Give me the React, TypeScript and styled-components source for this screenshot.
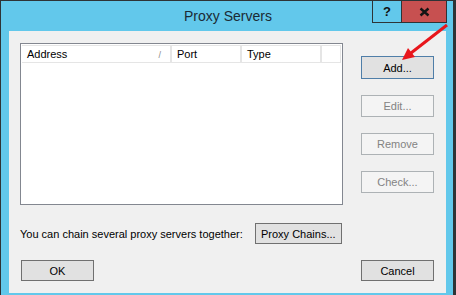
import React from "react";
import styled, { createGlobalStyle } from "styled-components";

const Global = createGlobalStyle`
  html, body { margin: 0; padding: 0; background: #ffffff; }
  body { font-family: "Liberation Sans", Arial, sans-serif; }
  * { box-sizing: border-box; }
`;

const Frame = styled.div`
  position: relative;
  width: 456px;
  height: 295px;
  overflow: hidden;
  background: #62c8eb;
  border-left: 1px solid #2e3336;
  border-top: 1px solid #2e3336;
  border-right: 3px solid #2e3336;
  display: flex;
  flex-direction: column;
`;

const TitleBar = styled.div`
  height: 30px;
  flex: none;
  display: grid;
  grid-template-columns: 1fr auto 1fr;
  align-items: start;
`;

const Title = styled.div`
  grid-column: 2;
  padding-top: 7px;
  font-size: 14px;
  color: #1b2b35;
  white-space: nowrap;
  margin-left: 2px;
`;

const CaptionButtons = styled.div`
  grid-column: 3;
  justify-self: end;
  display: flex;
  margin-right: 6px;
  margin-top: -1px;
`;

const CaptionButton = styled.div<{ $close?: boolean }>`
  height: 23px;
  width: ${(p) => (p.$close ? "46px" : "30px")};
  border: 1px solid #2e3336;
  margin-left: ${(p) => (p.$close ? "-1px" : "0")};
  background: ${(p) => (p.$close ? "#c75050" : "#62c8eb")};
  display: flex;
  align-items: center;
  justify-content: center;
  font-weight: bold;
  font-size: 13px;
  color: #111;
`;

const Client = styled.div`
  flex: none;
  height: 262px;
  margin: 0 7px 0 8px;
  background: #f0f0f0;
  padding: 12px 12px 0 11px;
  display: flex;
  flex-direction: column;
  font-size: 11px;
  color: #000;
`;

const TopRow = styled.div`
  display: flex;
  align-items: flex-start;
`;

const ListBox = styled.div`
  width: 323px;
  height: 162px;
  background: #ffffff;
  border: 1px solid #838790;
  padding: 1px;
`;

const Header = styled.div`
  display: flex;
  height: 18px;
  border-top: 1px solid #e5e5e5;
  border-bottom: 1px solid #e5e5e5;
  border-right: 1px solid #e5e5e5;
  background: #ffffff;
`;

const HeaderCell = styled.div<{ $w?: number }>`
  position: relative;
  flex: ${(p) => (p.$w ? `0 0 ${p.$w}px` : "1 1 auto")};
  border-right: ${(p) => (p.$w ? "2px solid #e5e5e5" : "none")};
  padding-left: 5px;
  display: flex;
  align-items: center;
  line-height: 16px;
  white-space: nowrap;
`;

const SortMark = styled.span`
  position: absolute;
  right: 9px;
  top: 1px;
  color: #8a8a8a;
  font-size: 9px;
`;

const ButtonColumn = styled.div`
  margin-left: 18px;
  padding-top: 13px;
  display: flex;
  flex-direction: column;
  gap: 16px;
`;

const Button = styled.div<{ $disabled?: boolean; $default?: boolean; $w?: number; $h?: number }>`
  width: ${(p) => p.$w ?? 73}px;
  height: ${(p) => p.$h ?? 22}px;
  display: flex;
  align-items: center;
  justify-content: center;
  white-space: nowrap;
  font-size: 11px;
  background: ${(p) => (p.$disabled ? "#f4f4f4" : "#e1e1e1")};
  color: ${(p) => (p.$disabled ? "#838383" : "#000")};
  border: 1px solid
    ${(p) => (p.$disabled ? "#adb2b5" : p.$default ? "#4f7ea8" : "#707070")};
`;

const ChainRow = styled.div`
  margin-top: 18px;
  display: flex;
  align-items: center;
  gap: 12px;
  height: 21px;
`;

const Label = styled.span`
  white-space: nowrap;
`;

const BottomRow = styled.div`
  margin-top: 16px;
  padding-left: 1px;
  display: flex;
  justify-content: space-between;
`;

const Arrow = styled.svg`
  position: absolute;
  left: -1px;
  top: -1px;
  pointer-events: none;
`;

export default function App() {
  return (
    <>
      <Global />
      <Frame>
        <TitleBar>
          <Title>Proxy Servers</Title>
          <CaptionButtons>
            <CaptionButton>?</CaptionButton>
            <CaptionButton $close>
              <svg width="11" height="10" viewBox="0 0 11 10">
                <path d="M1.5 1.5 L9.5 8.5 M9.5 1.5 L1.5 8.5" stroke="#141414" strokeWidth="2.4" />
              </svg>
            </CaptionButton>
          </CaptionButtons>
        </TitleBar>
        <Client>
          <TopRow>
            <ListBox>
              <Header>
                <HeaderCell $w={150}>
                  Address
                  <SortMark>/</SortMark>
                </HeaderCell>
                <HeaderCell $w={70}>Port</HeaderCell>
                <HeaderCell $w={80}>Type</HeaderCell>
                <HeaderCell />
              </Header>
            </ListBox>
            <ButtonColumn>
              <Button $default $h={23}>Add...</Button>
              <Button $disabled>Edit...</Button>
              <Button $disabled>Remove</Button>
              <Button $disabled>Check...</Button>
            </ButtonColumn>
          </TopRow>
          <ChainRow>
            <Label>You can chain several proxy servers together:</Label>
            <Button $w={87} $h={21}>Proxy Chains...</Button>
          </ChainRow>
          <BottomRow>
            <Button $h={21}>OK</Button>
            <Button $h={21}>Cancel</Button>
          </BottomRow>
        </Client>
        <Arrow width="456" height="295" viewBox="0 0 456 295">
          <line x1="447" y1="25" x2="411" y2="53" stroke="#e8161c" strokeWidth="3" />
          <polygon points="402,60 415,57 408,48" fill="#e8161c" />
        </Arrow>
      </Frame>
    </>
  );
}
